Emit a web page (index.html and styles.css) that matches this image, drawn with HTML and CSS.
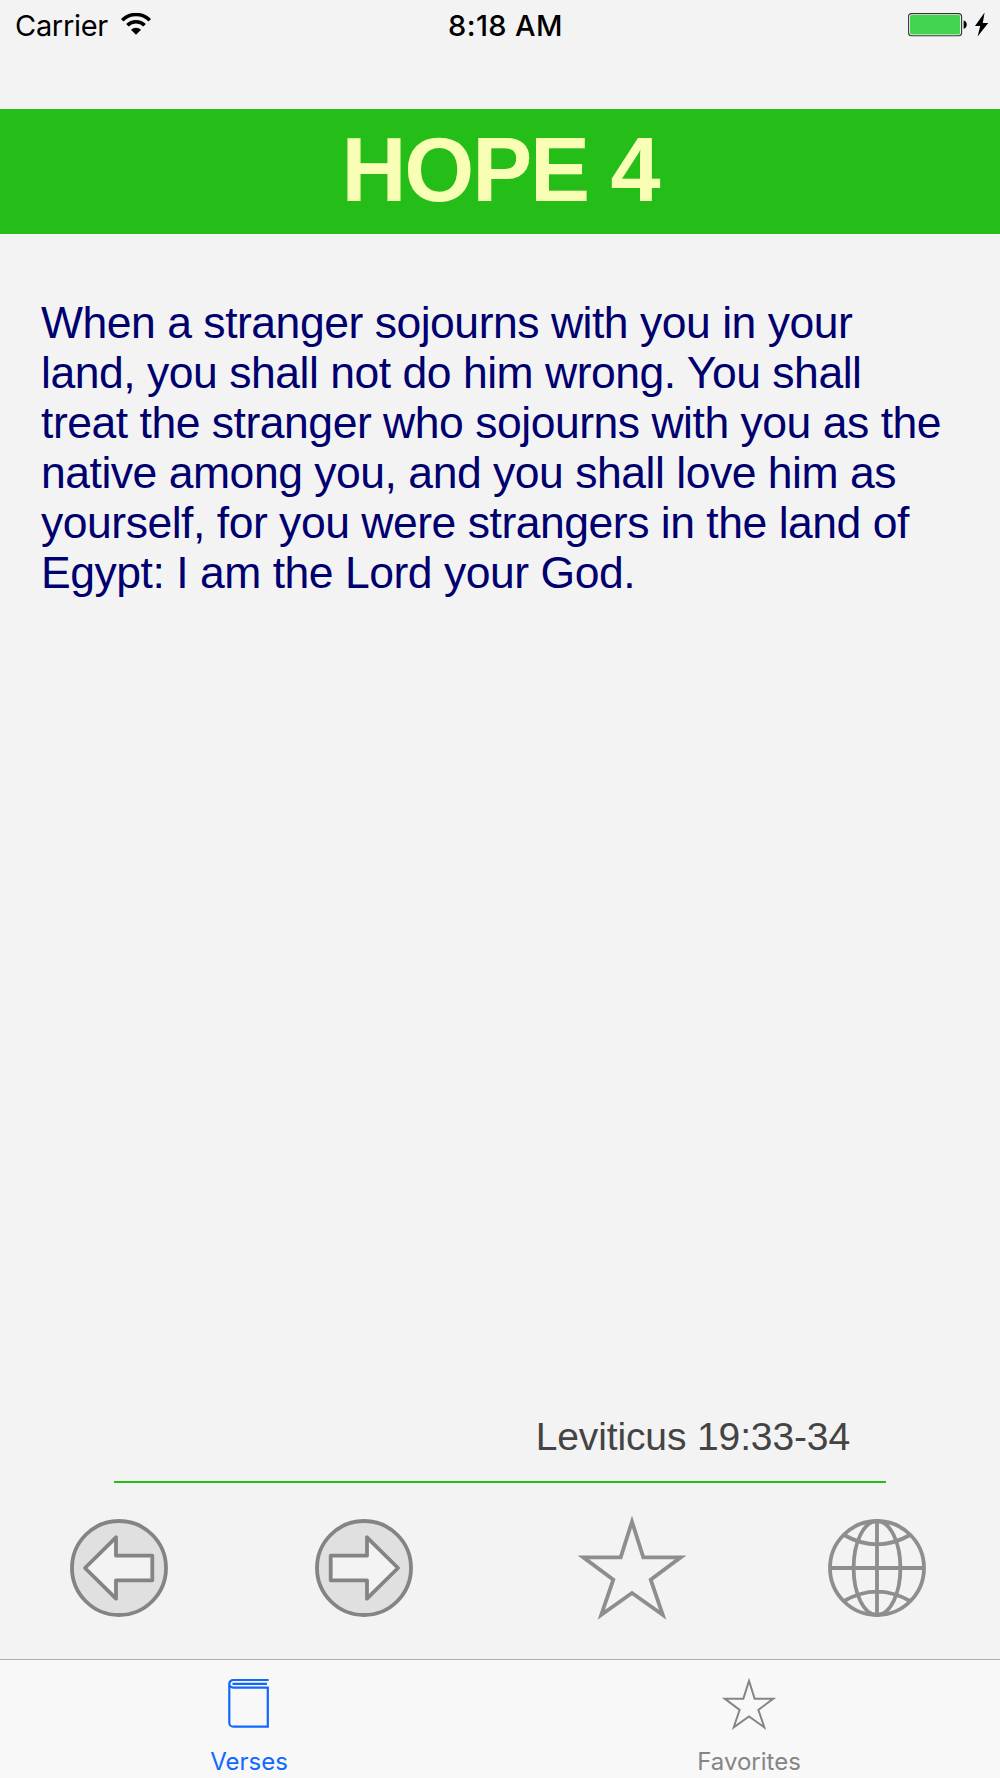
FILE: index.html
```html
<!DOCTYPE html>
<html lang="en">
<head>
  <meta charset="UTF-8" />
  <meta name="viewport" content="width=device-width, initial-scale=1.0" />
  <title>Hope 4</title>
  <link rel="stylesheet" href="styles.css">
</head>
<body>
  <div class="screen">
    <!-- status bar -->
    <div class="status-bar">
      <div class="status-left">
        <span class="carrier">Carrier</span>
        <svg class="wifi" width="30" height="22" viewBox="0 0 30 22">
          <path d="M1.2 7.2a19.5 19.5 0 0 1 27.6 0M6.4 12.3a12.2 12.2 0 0 1 17.2 0" fill="none" stroke="#000" stroke-width="3.5" />
          <path d="M15 21.8l-5-5.1a7.2 7.2 0 0 1 10 0z" />
        </svg>
      </div>
      <span class="time">8:18 AM</span>
      <div class="status-right">
        <svg width="82" height="26" viewBox="0 0 82 26">
          <rect x="0.6" y="1.6" width="53" height="22.2" rx="3" fill="#fff" stroke="#333" stroke-width="1.1" />
          <rect x="2" y="3" width="50.2" height="19.4" rx="1.6" fill="#43d551" />
          <path d="M55.6 8.6c4.2.6 4.2 7.6 0 8.2z" />
          <path d="M76.6 0.6L67 14h5.2l-2.6 10.4L80.2 11h-5.4z" />
        </svg>
      </div>
    </div>

    <h1 class="title">HOPE 4</h1>

    <p class="verse">
      When a stranger sojourns with you in your<br>
      land, you shall not do him wrong. You shall<br>
      treat the stranger who sojourns with you as the<br>
      native among you, and you shall love him as<br>
      yourself, for you were strangers in the land of<br>
      Egypt: I am the Lord your God.
    </p>

    <p class="reference">Leviticus 19:33-34</p>
    <div class="divider"></div>

    <!-- action buttons -->
    <div class="toolbar">
      <div class="tool-group">
        <svg class="tool" viewBox="-55 -55 110 110">
          <circle r="47" class="disc" />
          <path class="arrow" d="M-34 0L-3-30.7V-12.3H33.3V12.3H-3V30.7z" />
        </svg>
        <svg class="tool" viewBox="-55 -55 110 110">
          <circle r="47" class="disc" />
          <path class="arrow" d="M34 0L3-30.7V-12.3H-33.3V12.3H3V30.7z" />
        </svg>
      </div>
      <div class="tool-group">
        <svg class="tool outline" viewBox="-55 -55 110 110">
          <path id="star" d="M0-46.3L11.3-10.7H48.7L18.7 11.7L30.7 46.7L0 25L-30.7 46.7L-18.7 11.7L-48.7-10.7H-11.3z" />
        </svg>
        <svg class="tool outline" viewBox="-55 -55 110 110">
          <circle r="47" />
          <ellipse rx="23.4" ry="47" />
          <path d="M0-47V47M-47 0H47M-33-33Q0-14.3 33-33M-33 33Q0 14.3 33 33" />
        </svg>
      </div>
    </div>

    <!-- tabs -->
    <div class="tab-bar">
      <div class="tab active">
        <svg width="56" height="54" viewBox="0 0 56 54" fill="none" stroke="currentColor" stroke-width="2.2">
          <path d="M47.6 3H12.3a4 3.85 0 0 0-4 3.85V45.7a4 4 0 0 0 4 4H46.8V10.7H12.3a4 3.85 0 0 1-4-3.85M11.5 6.8H46" />
        </svg>
        <span>Verses</span>
      </div>
      <div class="tab">
        <svg width="56" height="54" viewBox="-56 -54 112 108" fill="none" stroke="currentColor" stroke-width="3.9" stroke-miterlimit="10">
          <use href="#star" />
        </svg>
        <span>Favorites</span>
      </div>
    </div>
  </div>
</body>
</html>
```

FILE: styles.css
```css
* {
  box-sizing: border-box;
}

body {
  margin: 0;
  background-color: #f3f3f3;
  font-family: "Liberation Sans", Arial, sans-serif;
}

.screen {
  display: flex;
  flex-direction: column;
  width: 1000px;
  height: 1778px;
}

/* status bar */
.status-bar {
  display: grid;
  grid-template-columns: 1fr auto 1fr;
  align-items: center;
  height: 52px;
  margin-bottom: 57px;
  padding: 0 10px 2px 15px;
  font-family: Inter, Roboto, sans-serif;
  font-size: 29px;
  color: #000;
}
.status-left {
  display: flex;
  align-items: center;
  gap: 13px;
}
.carrier {
  letter-spacing: -0.3px;
}
.wifi {
  margin-top: -3px;
}
.time {
  padding-left: 6px;
  font-weight: 500;
  letter-spacing: 0.4px;
}
.status-right {
  display: flex;
  justify-content: flex-end;
}

/* heading */
.title {
  height: 125px;
  margin: 0;
  line-height: 122px;
  text-align: center;
  font-size: 90px;
  letter-spacing: -2.2px;
  color: #f8ffb5;
  background-color: #25be18;
}

.verse {
  margin: 64px 0 0 41px;
  font-size: 44.5px;
  line-height: 50.05px;
  letter-spacing: -0.48px;
  white-space: nowrap;
  color: #00006e;
}

.reference {
  margin: auto 150px 0 0;
  text-align: right;
  font-size: 39px;
  line-height: 46px;
  letter-spacing: -0.12px;
  color: #444;
}

.divider {
  height: 2px;
  margin: 21px 114px 0;
  background-color: #25be18;
}

/* action buttons */
.toolbar {
  display: flex;
  justify-content: space-between;
  margin-top: 30px;
  padding: 0 68px 0 64px;
}
.tool-group {
  display: flex;
  gap: 135px;
}
.tool {
  width: 110px;
  height: 110px;
  stroke-width: 3.8;
}
.disc {
  fill: #e0e0e0;
  stroke: #848484;
}
.arrow {
  fill: #f3f3f3;
  stroke: #848484;
  stroke-linejoin: round;
}
.outline {
  fill: none;
  stroke: #8e8e8e;
  stroke-miterlimit: 10;
}

/* tab bar */
.tab-bar {
  display: flex;
  height: 119px;
  margin-top: 36px;
  border-top: 1px solid #b0b0b0;
  background-color: #f8f8f8;
}
.tab {
  flex: 1;
  display: flex;
  flex-direction: column;
  align-items: center;
  padding: 17px 2px 0 0;
  font-family: Inter, Roboto, sans-serif;
  font-size: 24px;
  color: #858585;
}
.tab span {
  margin-top: 16px;
  line-height: 30px;
}
.tab.active {
  color: #1068ff;
}
```
